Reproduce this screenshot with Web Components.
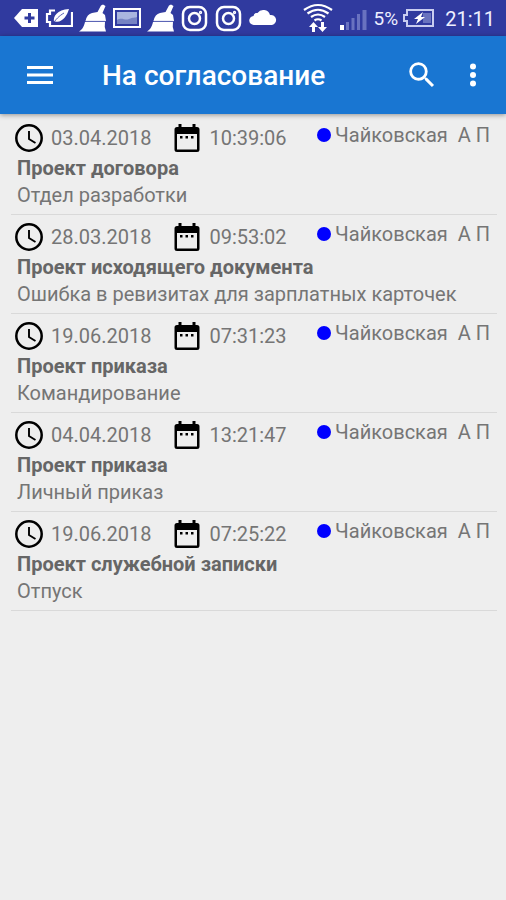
<!DOCTYPE html>
<html lang="ru">
<head>
<meta charset="utf-8">
<meta name="viewport" content="width=device-width, initial-scale=1">
<title>На согласование</title>
<style>
  body { margin: 0; min-height: 100vh; background: #eee; font-family: Roboto, "Noto Sans", sans-serif; color: #757575; }
</style>
</head>
<body>
<approval-screen></approval-screen>

<template id="status-bar">
  <style>
    :host { display: flex; align-items: center; justify-content: space-between; height: 36px; padding: 0 11px; background: #303a9f; color: #eef0ff; font-size: 20px; line-height: 36px; }
    div { display: flex; align-items: center; gap: 6px; }
    .system { gap: 7px; }
    svg { display: block; flex: none; }
    .clock { margin-left: 3px; padding-top: 2px; }
    .level { font-size: 19px; margin-right: -4px; padding-top: 2px; }
  </style>
  <div>
    <svg width="28" height="28" viewBox="0 0 28 28"><path d="M3 14 11 5h16v18H11z" fill="#fff"/><path d="M18.500 9v10M13.500 14h10" stroke="#303a9f" stroke-width="3"/></svg>
    <svg width="28" height="28" viewBox="0 0 28 28"><path d="M10 6.500H5V10H2v8h3v4h22V8" fill="none" stroke="#fff" stroke-width="2.200"/><path d="M9 18C8 12 12 6 24 5 22 12 17 19 10.500 17.500z" fill="#fff"/><path d="M7 21C11 15 14 12 19 9" fill="none" stroke="#303a9f" stroke-width=".8"/></svg>
    <svg width="28" height="28" viewBox="0 0 28 28"><path d="M18.500 8 22 1.500 24 .5 26.500 2 23.500 9l2.500 2 1 6H6.500Q8 10 13 9zM6 18h20q-1 5 1 9.500H0C4 25 5 22 6 18z" fill="#fff"/><path d="M6.500 17.200h20" stroke="#9ba4d8" stroke-width=".6"/></svg>
    <svg width="28" height="28" viewBox="0 0 28 28"><rect x="1" y="5" width="26" height="18" fill="#303a9f" stroke="#fff" stroke-width="2"/><path d="M4 8h20v12H4z" fill="#a9b5df"/><path d="M4 16c5-3 8 1 12-1s6-1 8-2v7H4z" fill="#7683c3"/></svg>
    <svg width="28" height="28" viewBox="0 0 28 28"><path d="M18.500 8 22 1.500 24 .5 26.500 2 23.500 9l2.500 2 1 6H6.500Q8 10 13 9zM6 18h20q-1 5 1 9.500H0C4 25 5 22 6 18z" fill="#fff"/><path d="M6.500 17.200h20" stroke="#9ba4d8" stroke-width=".6"/></svg>
    <svg width="28" height="28" viewBox="0 0 28 28" fill="none" stroke="#fff" stroke-width="2.500"><rect x="2" y="3" width="23" height="23" rx="7"/><circle cx="13.500" cy="14.500" r="5.500"/><circle cx="19.500" cy="8.500" r="1" stroke-width="1.300"/></svg>
    <svg width="28" height="28" viewBox="0 0 28 28" fill="none" stroke="#fff" stroke-width="2.500"><rect x="2" y="3" width="23" height="23" rx="7"/><circle cx="13.500" cy="14.500" r="5.500"/><circle cx="19.500" cy="8.500" r="1" stroke-width="1.300"/></svg>
    <svg width="28" height="28" viewBox="0 0 28 28"><path d="M5 21a4.500 4.500 0 0 1-.5-9 3.500 3.500 0 0 1 4-3A7 7 0 0 1 21 11a5 5 0 0 1 2 10z" fill="#fff"/></svg>
  </div>
  <div class="system">
    <svg width="30" height="30" viewBox="0 0 30 30"><g fill="none" stroke="#fff" stroke-width="2.200"><path d="M1 7q14-10 28 0M4.500 10.500q10.500-7.500 21 0M8 14q7-5 14 0M11.500 17.500q3.500-2.500 7 0"/></g><path d="m10.500 19 4.500 5h-3v5H9v-5H6zM19.500 29l-4.500-5h3v-5h3v5h3z" fill="#fff"/></svg>
    <svg width="27" height="28" viewBox="0 0 27 28"><path d="M0 21h4v5H0z" fill="#fff"/><path d="M6 18h3v8H6zM11.500 14h3v12h-3zM17 10h3v16h-3zM22.500 6h4v20h-4z" fill="#6972c0"/></svg>
    <span class="level">5%</span>
    <svg width="34" height="28" viewBox="0 0 34 28"><path d="M6 6h26v16H6v-5H3v-6h3z" fill="none" stroke="#c9cdf0" stroke-width="2"/><path d="M22 9h8v10h-8z" fill="#6973be"/><path d="m22 8-9 7h4l-2 5 9-7h-4z" fill="#fff"/></svg>
    <span class="clock">21:11</span>
  </div>
</template>

<template id="app-bar">
  <style>
    :host { display: flex; align-items: center; height: 78px; padding: 0 17px 0 24px; background: #1976d2; color: #fff; box-shadow: 0 1px 5px rgba(0,0,0,.4); }
    h1 { flex: 1; margin: 0 0 0 46px; font-size: 28px; line-height: 32px; font-weight: 500; padding-top: 2px; white-space: nowrap; }
    button { display: block; border: 0; padding: 0; background: none; color: inherit; }
    button + button { margin-left: 18px; }
    svg { display: block; fill: currentColor; }
  </style>
  <button aria-label="Меню"><svg width="32" height="32" viewBox="0 0 32 32"><path d="M3 7h26v3H3zM3 14.500h26v3H3zM3 22h26v3H3z"/></svg></button>
  <h1><slot></slot></h1>
  <button aria-label="Поиск"><svg width="34" height="34" viewBox="0 0 24 24"><path d="M15.500 14h-.79l-.28-.27A6.471 6.471 0 0 0 16 9.500 6.500 6.500 0 1 0 9.500 16c1.610 0 3.090-.59 4.230-1.570l.27.28v.79l5 4.990L20.490 19zm-6 0C7.010 14 5 11.990 5 9.500S7.010 5 9.500 5 14 7.010 14 9.500 11.990 14 9.500 14z"/></svg></button>
  <button aria-label="Ещё"><svg width="32" height="32" viewBox="0 0 32 32"><circle cx="16" cy="7.500" r="3"/><circle cx="16" cy="16" r="3"/><circle cx="16" cy="24.500" r="3"/></svg></button>
</template>

<template id="document-item">
  <style>
    :host { display: block; box-sizing: border-box; min-height: 99px; padding: 4px 7px 5px 4px; border-bottom: 1px solid #d9d9d9; font-size: 20px; line-height: 27px; }
    .meta { display: flex; align-items: center; height: 35px; }
    svg { display: block; flex: none; }
    time { padding-top: 2px; }
    .date { margin: 0 22px 0 8px; }
    .time { margin-left: 8px; }
    .person { display: flex; align-items: center; gap: 4px; margin: -5px 0 0 auto; white-space: pre; }
    .person i { width: 14px; height: 14px; border-radius: 50%; background: #00f; }
    h2, p { margin: 0 0 0 2px; font-size: 20px; line-height: 27px; }
    h2 { font-weight: 700; color: #666; }
  </style>
  <div class="meta">
    <svg width="28" height="28" viewBox="0 0 28 28" fill="none" stroke="#000"><circle cx="14" cy="14" r="12.700" stroke-width="2.500"/><path d="M14 7v8l6.500 4" stroke-width="1.900"/></svg>
    <time class="date"><slot name="date"></slot></time>
    <svg width="28" height="30" viewBox="0 0 28 30"><path d="M5.500 1h3v3h11V1h3v3H24q2.500 0 2.500 2.500v20Q26.500 29 24 29H4q-2.500 0-2.500-2.500v-20Q1.500 4 4 4h1.500zM4 11v15.500h20V11zM7 13h2.500v2.500H7zM12.500 13H15v2.500h-2.500zM18 13h2.500v2.500H18z" fill-rule="evenodd"/></svg>
    <time class="time"><slot name="time"></slot></time>
    <span class="person"><i></i><slot name="person"></slot></span>
  </div>
  <h2><slot name="title"></slot></h2>
  <p><slot name="note"></slot></p>
</template>

<template id="approval-screen">
  <style>
    :host { display: block; }
    app-bar { position: relative; }
    main { padding: 2px 9px 0 11px; }
  </style>
  <status-bar></status-bar>
  <app-bar>На согласование</app-bar>
  <main></main>
</template>

<script>
  const documents = [
    ["03.04.2018", "10:39:06", "Проект договора", "Отдел разработки"],
    ["28.03.2018", "09:53:02", "Проект исходящего документа", "Ошибка в ревизитах для зарплатных карточек"],
    ["19.06.2018", "07:31:23", "Проект приказа", "Командирование"],
    ["04.04.2018", "13:21:47", "Проект приказа", "Личный приказ"],
    ["19.06.2018", "07:25:22", "Проект служебной записки", "Отпуск"]
  ];

  class TemplateElement extends HTMLElement {
    constructor() {
      super();
      const template = document.getElementById(this.localName);
      this.attachShadow({ mode: "open" }).append(template.content.cloneNode(true));
    }
  }

  class ApprovalScreen extends TemplateElement {
    connectedCallback() {
      const main = this.shadowRoot.querySelector("main");
      main.replaceChildren(...documents.map(([date, time, title, note]) => {
        const item = document.createElement("document-item");
        const parts = { date, time, person: "Чайковская  А П", title, note };
        for (const [slot, text] of Object.entries(parts)) {
          const span = document.createElement("span");
          span.slot = slot;
          span.textContent = text;
          item.append(span);
        }
        return item;
      }));
    }
  }

  customElements.define("status-bar", class extends TemplateElement {});
  customElements.define("app-bar", class extends TemplateElement {});
  customElements.define("document-item", class extends TemplateElement {});
  customElements.define("approval-screen", ApprovalScreen);
</script>
</body>
</html>
